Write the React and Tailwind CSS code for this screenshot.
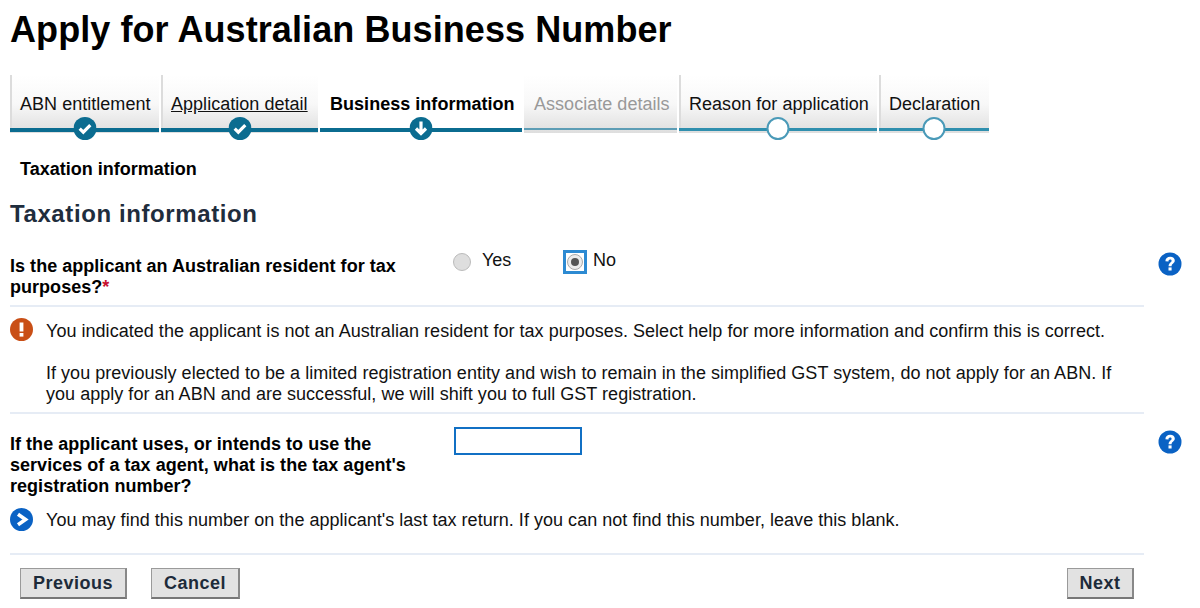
import React from "react";

const tabs = [
  { label: "ABN entitlement", w: "w-[149px]", state: "done" },
  { label: "Application detail", w: "w-[157px]", state: "done", link: true },
  { label: "Business information", w: "w-[202px]", state: "current" },
  { label: "Associate details", w: "w-[153px]", state: "disabled" },
  { label: "Reason for application", w: "w-[198px]", state: "todo" },
  { label: "Declaration", w: "w-[110px]", state: "todo" },
];

function Marker({ state }) {
  if (state === "disabled") return null;
  if (state === "todo") {
    return <span className="absolute left-1/2 top-[42px] -translate-x-1/2 w-[23px] h-[23px] rounded-full bg-white border-[2px] border-[#4a9ab8]" />;
  }
  return (
    <svg className="absolute left-1/2 top-[42px] -translate-x-1/2" width="23" height="23" viewBox="0 0 23 23">
      <circle cx="11.5" cy="11.5" r="11.5" fill="#0b6c90" />
      {state === "done" ? (
        <path d="M6.2 11.6l3.6 3.6 7-7" fill="none" stroke="#fff" strokeWidth="3.2" />
      ) : (
        <path d="M11.5 4.5v12M6.5 11.5l5 5 5-5" fill="none" stroke="#fff" strokeWidth="3.2" />
      )}
    </svg>
  );
}

function Tab({ t }) {
  const current = t.state === "current";
  const disabled = t.state === "disabled";
  const line = current || t.state === "done"
    ? "h-[4px] bg-[#0b6c90]"
    : disabled ? "h-[2px] bg-[#5d9db5]" : "h-[3px] bg-[#2f8fae]";
  return (
    <div className={`relative ${t.w} h-[58px] ${current ? "bg-white" : "bg-gradient-to-b from-white via-[#f8f8f8] to-[#dedede]"} ${current || disabled ? "" : "shadow-[inset_2px_0_0_#dcdcdc]"}`}>
      <div className={`pt-[17px] pl-[10px] text-[18px] leading-[24px] whitespace-nowrap tracking-[0.03px] ${current ? "font-bold text-black" : disabled ? "text-[#999]" : "text-[#111]"} ${t.link ? "underline" : ""}`}>
        {t.label}
      </div>
      <div className={`absolute left-0 right-0 top-[53px] ${line}`} />
      <Marker state={t.state} />
    </div>
  );
}

function Help() {
  return (
    <svg width="24" height="24" viewBox="0 0 24 24">
      <circle cx="12" cy="12" r="11.5" fill="#0a62c4" />
      <path d="M7.4 9.2c0-2.7 2-4.4 4.8-4.4 2.7 0 4.6 1.5 4.6 3.8 0 2.9-3.2 3-3.2 5.6h-3c0-3.4 3-3.6 3-5.4 0-.8-.6-1.3-1.5-1.3-1 0-1.6.7-1.6 1.9z" fill="#fff" />
      <rect x="10.5" y="15.4" width="3.1" height="3.1" fill="#fff" />
    </svg>
  );
}

function Btn({ children, w }) {
  return (
    <button className={`${w} h-[31px] bg-[#e2e2e2] border border-[#9a9a9a] border-b-2 border-b-[#777] border-r-2 border-r-[#888] text-[18px] font-bold text-[#1d2b3a] tracking-[0.5px] leading-none`}>
      {children}
    </button>
  );
}

export default function App() {
  return (
    <div className="w-[1200px] h-[608px] overflow-hidden bg-white text-[#111] font-['Liberation_Sans',Arial,sans-serif]">
      <div className="pl-[10px]">
        <h1 className="pt-[9px] text-[36px] leading-[42px] font-bold text-black tracking-[0.08px]">Apply for Australian Business Number</h1>
        <div className="mt-[24px] flex gap-[2px]">
          {tabs.map((t) => <Tab key={t.label} t={t} />)}
        </div>
        <div className="mt-[24px] pl-[10px] text-[18px] leading-[24px] font-bold text-black">Taxation information</div>
        <h2 className="mt-[19px] text-[24px] leading-[28px] font-bold text-[#1f2d3d] tracking-[0.6px]">Taxation information</h2>

        <div className="w-[1134px] mt-[21px]">
          <div className="relative flex h-[58px] border-b-2 border-[#e6ecf5] pt-[7px]">
            <div className="w-[444px] pr-[40px] text-[18px] leading-[21px] font-bold text-black tracking-[0.03px]">
              Is the applicant an Australian resident for tax purposes?<span className="text-[#c8102e]">*</span>
            </div>
            <div className="flex items-start text-[18px] leading-[21px] -mt-[6px]">
              <span className="flex items-center w-[109px] -ml-[1px]">
                <span className="w-[18px] h-[18px] mt-[3px] rounded-full bg-[#dedede] border border-[#bbb]" />
                <span className="ml-[11px] -mt-[1px]">Yes</span>
              </span>
              <span className="flex items-center ml-[1px]">
                <span className="w-[24px] h-[24px] border-[3px] border-[#2d8ad2] flex items-center justify-center">
                  <span className="w-[16px] h-[16px] rounded-full bg-[#ececec] border border-[#aaa] flex items-center justify-center">
                    <span className="w-[8px] h-[8px] rounded-full bg-[#555]" />
                  </span>
                </span>
                <span className="ml-[6px] -mt-[4px]">No</span>
              </span>
            </div>
            <div className="absolute left-[1148px] top-[3px]"><Help /></div>
          </div>

          <div className="relative h-[107px] border-b-2 border-[#e6ecf5] pl-[36px] pr-[30px] pt-[14px] text-[18px] leading-[21px] text-[#111] tracking-[0.03px]">
            <svg className="absolute left-0 top-[11px]" width="23" height="23" viewBox="0 0 23 23">
              <circle cx="11.5" cy="11.5" r="11.5" fill="#c94f16" />
              <rect x="9.6" y="4.5" width="3.8" height="9" fill="#fff" />
              <rect x="9.6" y="15" width="3.8" height="3.6" fill="#fff" />
            </svg>
            <p>You indicated the applicant is not an Australian resident for tax purposes. Select help for more information and confirm this is correct.</p>
            <p className="mt-[21px]">If you previously elected to be a limited registration entity and wish to remain in the simplified GST system, do not apply for an ABN. If you apply for an ABN and are successful, we will shift you to full GST registration.</p>
          </div>

          <div className="relative flex pt-[20px]">
            <div className="w-[444px] pr-[30px] text-[18px] leading-[21px] font-bold text-black tracking-[0.03px]">
              If the applicant uses, or intends to use the services of a tax agent, what is the tax agent's registration number?
            </div>
            <input className="w-[128px] h-[28px] mt-[-7px] border-2 border-[#1170c4] bg-white outline-none" aria-label="registration number" />
            <div className="absolute left-[1148px] top-[16px]"><Help /></div>
          </div>

          <div className="relative h-[58px] border-b-2 border-[#e6ecf5] pl-[36px] pt-[13px] text-[18px] leading-[21px] text-[#111] tracking-[0.03px]">
            <svg className="absolute left-0 top-[11px]" width="23" height="23" viewBox="0 0 23 23">
              <circle cx="11.5" cy="11.5" r="11.5" fill="#0a62c4" />
              <path d="M8 6.3l7.5 5.2L8 16.7" fill="none" stroke="#fff" strokeWidth="3.6" />
            </svg>
            You may find this number on the applicant's last tax return. If you can not find this number, leave this blank.
          </div>

          <div className="flex items-start px-[10px] pt-[13px]">
            <Btn w="w-[107px]">Previous</Btn>
            <div className="ml-[24px]"><Btn w="w-[89px]">Cancel</Btn></div>
            <div className="ml-auto"><Btn w="w-[67px]">Next</Btn></div>
          </div>
        </div>
      </div>
    </div>
  );
}
